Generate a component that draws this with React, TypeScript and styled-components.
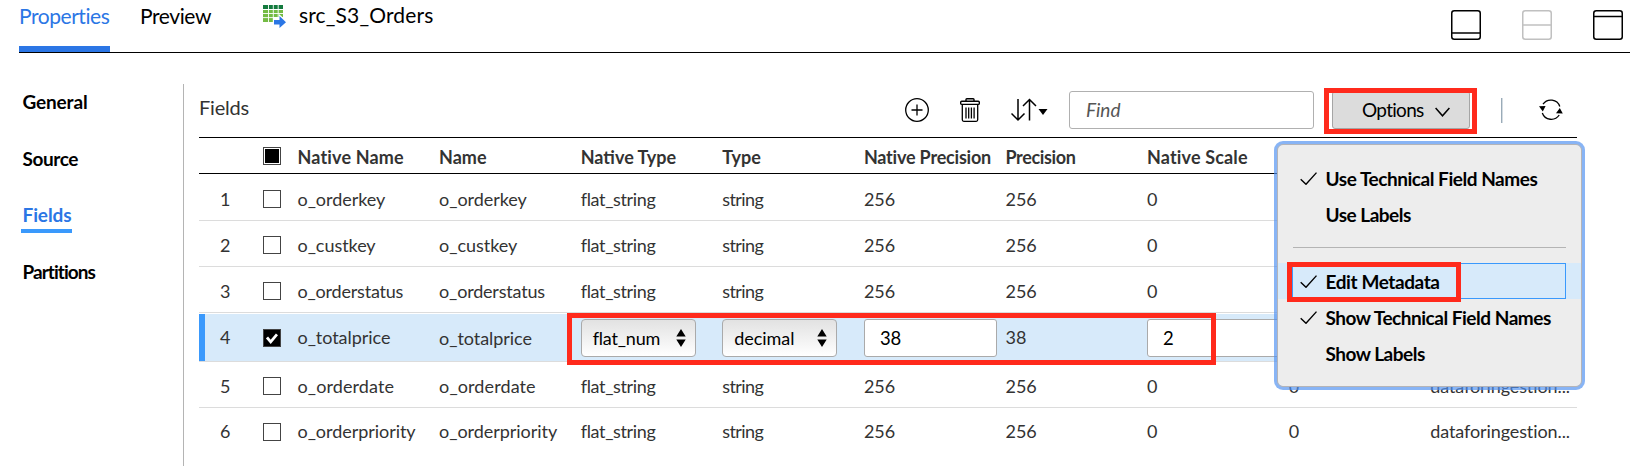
import React from "react";
import styled, { createGlobalStyle, css } from "styled-components";

const GlobalStyle = createGlobalStyle`
  *, *::before, *::after { box-sizing: border-box; }
  body { margin: 0; background: #fff; overflow: hidden; }
`;

const highlight = "#ff2a1c";

const Page = styled.div`
  width: 1630px;
  height: 466px;
  overflow: hidden;
  background: #fff;
  color: #000;
  font-family: Lato, "Liberation Sans", sans-serif;
  font-size: 18px;
  display: flex;
  flex-direction: column;
`;

const Text = styled.span<{ $track?: number }>`
  letter-spacing: ${(p) => p.$track ?? 0}px;
  white-space: nowrap;
`;

/* ---------- tab bar ---------- */

const TabBar = styled.header`
  display: flex;
  height: 53px;
  flex: none;
  margin-left: 19px;
  border-bottom: 1px solid #000;
`;

const Tab = styled.div<{ $active?: boolean }>`
  width: ${(p) => (p.$active ? 91 : 71)}px;
  margin-right: 30px;
  height: 52px;
  font-size: 21px;
  line-height: 32px;
  color: ${(p) => (p.$active ? "#2b76e5" : "#000")};
  border-bottom: ${(p) => (p.$active ? "6px solid #2b76e5" : "none")};
`;

const ObjectTitle = styled.div`
  display: flex;
  margin-left: 22px;
  gap: 13px;
  font-size: 21px;
  line-height: 29px;
  svg { margin-top: 5px; }
`;

const PanelIcons = styled.div`
  display: flex;
  gap: 41px;
  margin: 10px 7px 0 auto;
`;

/* ---------- body ---------- */

const Body = styled.div`
  display: flex;
  flex: 1;
  min-height: 0;
  padding: 31px 0 0 21px;
`;

const SideNav = styled.nav`
  width: 162px;
  display: flex;
  flex-direction: column;
  align-items: flex-start;
  gap: 24.7px;
  padding-top: 2px;
`;

const SideItem = styled.a<{ $active?: boolean }>`
  height: 32px;
  line-height: 32px;
  padding: 0 1px 0 1.500px;
  font-size: 19px;
  font-weight: 700;
  color: ${(p) => (p.$active ? "#2b76e5" : "#000")};
  ${(p) => p.$active && css`box-shadow: 0 4px 0 0 #3a99fc; height: 30px; margin-bottom: 2px;`}
`;

const Main = styled.main`
  border-left: 1px solid #b4b4b4;
  padding-left: 15px;
  width: 1394px;
  display: flex;
  flex-direction: column;
`;

const Toolbar = styled.div`
  display: flex;
  align-items: flex-start;
  height: 53px;
  flex: none;
  position: relative;
  color: #333;
`;

const Heading = styled.div`
  font-size: 20px;
  line-height: 47px;
  width: 706px;
`;

const ToolIcons = styled.div`
  display: flex;
  width: 164px;
  gap: 31px;
  padding-top: 14px;
  svg { flex: none; }
`;

const Find = styled.input`
  width: 245px;
  height: 38px;
  margin-top: 7px;
  padding: 0 0 1px 16px;
  border: 1px solid #b0b0b0;
  border-radius: 3px;
  font: italic 19px Lato, sans-serif;
  &::placeholder { color: #555; opacity: 1; }
`;

const OptionsWrap = styled.div`
  position: relative;
  margin: 7px 0 0 18px;
`;

const OptionsButton = styled.button`
  display: flex;
  align-items: center;
  gap: 11px;
  width: 138px;
  height: 38px;
  padding: 0 0 1px 29px;
  border: 1px solid #a5a5a5;
  border-radius: 3px;
  background: #dcdcdc;
  font: 19px Lato, sans-serif;
  color: #000;
  svg { margin-top: 4px; }
`;

const Callout = styled.div<{ $x: number; $y: number; $w: number; $h: number }>`
  position: absolute;
  left: ${(p) => p.$x}px;
  top: ${(p) => p.$y}px;
  width: ${(p) => p.$w}px;
  height: ${(p) => p.$h}px;
  border: 5px solid ${highlight};
  pointer-events: none;
`;

const Divider = styled.div`
  width: 1px;
  height: 25px;
  margin: 14px 36px 0 31px;
  background: #9aabb8;
  box-shadow: 1px 0 0 #d4dce2;
`;

const RefreshSlot = styled.div`
  padding-top: 14px;
`;

/* ---------- table ---------- */

const columns = css`
  display: grid;
  grid-template-columns: 64px 34.5px repeat(9, 141.6px);
`;

const Table = styled.div`
  position: relative;
  width: 1378px;
`;

const HeaderRow = styled.div`
  ${columns}
  height: 37px;
  width: 1378px;
  overflow: hidden;
  border-top: 1px solid #000;
  border-bottom: 1px solid #000;
  color: #333;
  font-weight: 700;
  line-height: 38px;
  font-size: 18px;
`;

const Row = styled.div<{ $h: number; $pad: number; $selected?: boolean; $last?: boolean }>`
  ${columns}
  width: 1378px;
  overflow: hidden;
  height: ${(p) => p.$h}px;
  padding-top: ${(p) => p.$pad}px;
  border-bottom: 1px solid ${(p) => (p.$last ? "transparent" : "#dcdcdc")};
  color: #333;
  line-height: 34px;
  ${(p) =>
    p.$selected &&
    css`
      margin-top: 1px;
      background: linear-gradient(90deg, #3a99fc 6px, #d7eafa 6px);
    `}
`;

const Num = styled.div<{ $drop?: number }>`
  padding: ${(p) => p.$drop ?? 0}px 0 0 21px;
`;

const Cell = styled.div<{ $drop?: number }>`
  padding-top: ${(p) => p.$drop ?? 0}px;
  white-space: nowrap;
`;

const Box = styled.div<{ $state?: "on" | "mixed"; $top: number }>`
  width: 18px;
  height: 18px;
  margin-top: ${(p) => p.$top}px;
  display: flex;
  align-items: center;
  justify-content: center;
  border: 1px solid #444;
  background: ${(p) => (p.$state === "on" ? "#000" : "#fff")};
  ${(p) => p.$state === "mixed" && css`&::after { content: ""; width: 14px; height: 14px; background: #000; }`}
`;

const Select = styled.div`
  display: flex;
  align-items: center;
  justify-content: space-between;
  width: 115px;
  height: 38px;
  margin-top: 1px;
  padding: 0 9px 0 11px;
  border: 1px solid #aaa;
  border-radius: 4px;
  background: linear-gradient(#e2e2e2, #fff);
  color: #000;
`;

const Entry = styled.input<{ $w: number }>`
  display: block;
  width: ${(p) => p.$w}px;
  height: 38px;
  margin-top: 1px;
  padding: 0 0 1px 15px;
  border: 1px solid #aaa;
  border-radius: 3px;
  background: #fff;
  font: 18.500px Lato, sans-serif;
  color: #000;
`;

/* ---------- menu ---------- */

const Menu = styled.div`
  position: absolute;
  left: -55px;
  top: 53px;
  z-index: 2;
  width: 305px;
  height: 243px;
  padding: 15px 0 0;
  border: 1px solid #b4b4b8;
  border-radius: 6px;
  background: #ededed;
  background-clip: padding-box;
  box-shadow: 0 0 0 3px rgba(80, 144, 240, 0.68);
  color: #000;
  font-size: 19px;
  font-weight: 700;
`;

const MenuItem = styled.div<{ $focused?: boolean }>`
  display: flex;
  height: 36px;
  padding: 0 15px 0 14px;
  background: ${(p) => (p.$focused ? "#d7eafa" : "transparent")};
`;

const MenuInner = styled.div<{ $focused?: boolean }>`
  display: flex;
  flex: 1;
  align-items: center;
  padding-left: 7px;
  border: 1px solid ${(p) => (p.$focused ? "#3a99fc" : "transparent")};
`;

const CheckSlot = styled.span`
  display: flex;
  width: 25.500px;
`;

const MenuRule = styled.div`
  height: 1px;
  margin: 15px 15px 15px;
  background: #b4b4b4;
`;

/* ---------- icons ---------- */

const TableIcon = () => (
  <svg width="23" height="23" viewBox="0 0 23 23">
    <path d="M0 0h20v4H0z" fill="#137a3e" />
    <path d="M0 5h20v12H0z" fill="#74bb44" />
    <path d="M5.5 0v17M10.3 0v17M15.2 0v17M0 4.5h20M0 8.5h20M0 12.6h20" stroke="#fff" strokeWidth=".9" />
    <path d="M10 12h6V9l8 7v7H10z" fill="#fff" />
    <path d="M11 15h5.5v-4L23 17.2 16.500 23v-3.500H11z" fill="#2b76e5" />
  </svg>
);

const PanelIcon = ({ line, color = "#000" }: { line: number; color?: string }) => (
  <svg width="30" height="30" viewBox="0 0 30 30" fill="none" stroke={color} strokeWidth="1.500">
    <rect x=".75" y=".75" width="28.500" height="28.500" rx="2.500" />
    <path d={`M1 ${line}h28`} />
  </svg>
);

const AddIcon = () => (
  <svg width="24" height="24" viewBox="0 0 24 24" fill="none" stroke="#000" strokeWidth="1.300">
    <circle cx="12" cy="12" r="11.300" />
    <path d="M12 6.500v11M6.500 12h11" />
  </svg>
);

const TrashIcon = () => (
  <svg width="20" height="24" viewBox="0 0 20 24" fill="none" stroke="#000" strokeWidth="1.400">
    <path d="M6 3V1.500q0-.8.8-.8h6.400q.8 0 .8.800V3" />
    <rect x=".7" y="3.200" width="18.600" height="3.200" rx="1" />
    <path d="M2.300 6.400v15.400q0 1.500 1.500 1.500h12.400q1.500 0 1.500-1.500V6.400M6 9.500v11M8.700 9.500v11M11.400 9.500v11M14.100 9.500v11" strokeWidth="1.300" />
  </svg>
);

const SortIcon = () => (
  <svg width="37" height="24" viewBox="0 0 37 24" fill="none" stroke="#000" strokeWidth="1.500">
    <path d="M7 1v21M.5 15.500l6.500 6.500 6.500-6.500M18.500 22.500V2M12 8l6.500-6.500L25 8" />
    <path d="M27.500 11h9l-4.500 6z" fill="#000" stroke="none" />
  </svg>
);

const Chevron = () => (
  <svg width="15" height="10" viewBox="0 0 15 10" fill="none" stroke="#000" strokeWidth="1.500">
    <path d="M.6 1l6.900 7.800L14.400 1" />
  </svg>
);

const RefreshIcon = () => (
  <svg width="26" height="24" viewBox="0 0 26 24" fill="none" stroke="#000" strokeWidth="1.300">
    <path d="M5 6.200A9.500 9.500 0 0 1 21.800 8.500M21.200 17A9.500 9.500 0 0 1 4.300 15" />
    <path d="M1 8.200l6.600-.3-2.800 5.500zM18 15.200l3.800-5.200 3 5.600z" fill="#000" stroke="none" />
  </svg>
);

const Tick = () => (
  <svg width="17" height="13" viewBox="0 0 17 13" fill="none" stroke="#000" strokeWidth="1.400">
    <path d="M.7 7.300l5.300 5L16.500.6" />
  </svg>
);

const BoxTick = () => (
  <svg width="12" height="11" viewBox="0 0 12 11" fill="none" stroke="#fff" strokeWidth="2.800">
    <path d="M1 4.500l3.700 4.300L11 1.300" />
  </svg>
);

const UpDown = () => (
  <svg width="10" height="18" viewBox="0 0 10 18">
    <path d="M5 0l4.700 7.500H.3zM5 18l4.700-7.500H.3z" />
  </svg>
);

/* ---------- data ---------- */

const headers: [string, number][] = [
  ["Native Name", 0.15],
  ["Name", 0],
  ["Native Type", 0],
  ["Type", 0],
  ["Native Precision", -0.2],
  ["Precision", -0.35],
  ["Native Scale", 0.15],
];

type Field = { n: number; name: string; h: number; pad: number; track: number; covered?: boolean };

const fields: Field[] = [
  { n: 1, name: "o_orderkey", h: 47, pad: 8, track: -0.05, covered: true },
  { n: 2, name: "o_custkey", h: 46, pad: 7, track: -0.05, covered: true },
  { n: 3, name: "o_orderstatus", h: 46, pad: 7, track: -0.2, covered: true },
  { n: 4, name: "o_totalprice", h: 48, pad: 4, track: -0.05 },
  { n: 5, name: "o_orderdate", h: 46, pad: 7, track: 0.1 },
  { n: 6, name: "o_orderpriority", h: 46, pad: 6, track: -0.05 },
];

const FieldRow = ({ f }: { f: Field }) => {
  const selected = f.n === 4;
  return (
    <Row $h={f.h} $pad={f.pad} $selected={selected} $last={f.n === 6}>
      <Num $drop={selected ? 2 : 0}><Text>{f.n}</Text></Num>
      <Box $top={selected ? 11 : f.n === 6 ? 9 : 8} $state={selected ? "on" : undefined}>
        {selected && <BoxTick />}
      </Box>
      <Cell $drop={selected ? 2 : 0}><Text $track={f.track}>{f.name}</Text></Cell>
      <Cell $drop={selected ? 3 : 0}><Text $track={f.track}>{f.name}</Text></Cell>
      {selected ? (
        <>
          <Cell><Select><Text $track={-0.2}>flat_num</Text><UpDown /></Select></Cell>
          <Cell><Select><Text $track={-0.05}>decimal</Text><UpDown /></Select></Cell>
          <Cell><Entry $w={133} defaultValue="38" /></Cell>
          <Cell $drop={2}><Text>38</Text></Cell>
          <Cell><Entry $w={141} defaultValue="2" /></Cell>
        </>
      ) : (
        <>
          <Cell><Text $track={-0.35}>flat_string</Text></Cell>
          <Cell><Text $track={-0.6}>string</Text></Cell>
          <Cell><Text>256</Text></Cell>
          <Cell><Text>256</Text></Cell>
          <Cell><Text>0</Text></Cell>
          {!f.covered && (
            <>
              <Cell><Text>0</Text></Cell>
              <Cell><Text $track={-0.1}>dataforingestion...</Text></Cell>
            </>
          )}
        </>
      )}
    </Row>
  );
};

export default function App() {
  return (
    <Page>
      <GlobalStyle />
      <TabBar>
        <Tab $active><Text $track={-0.45}>Properties</Text></Tab>
        <Tab><Text $track={-0.4}>Preview</Text></Tab>
        <ObjectTitle><TableIcon /><Text $track={0.15}>src_S3_Orders</Text></ObjectTitle>
        <PanelIcons>
          <PanelIcon line={23} />
          <PanelIcon line={15} color="#c0c0c0" />
          <PanelIcon line={6.500} />
        </PanelIcons>
      </TabBar>
      <Body>
        <SideNav>
          <SideItem><Text $track={-0.15}>General</Text></SideItem>
          <SideItem><Text $track={-0.4}>Source</Text></SideItem>
          <SideItem $active><Text $track={-0.1}>Fields</Text></SideItem>
          <SideItem><Text $track={-0.95}>Partitions</Text></SideItem>
        </SideNav>
        <Main>
          <Toolbar>
            <Heading><Text $track={-0.2}>Fields</Text></Heading>
            <ToolIcons><AddIcon /><TrashIcon /><SortIcon /></ToolIcons>
            <Find placeholder="Find" />
            <OptionsWrap>
              <OptionsButton><Text $track={-0.7}>Options</Text><Chevron /></OptionsButton>
              <Callout $x={-8} $y={-3} $w={153} $h={46} />
              <Menu>
                <MenuItem><MenuInner><CheckSlot><Tick /></CheckSlot><Text $track={-0.46}>Use Technical Field Names</Text></MenuInner></MenuItem>
                <MenuItem><MenuInner><CheckSlot /><Text $track={-0.5}>Use Labels</Text></MenuInner></MenuItem>
                <MenuRule />
                <MenuItem $focused><MenuInner $focused><CheckSlot><Tick /></CheckSlot><Text $track={-0.4}>Edit Metadata</Text></MenuInner></MenuItem>
                <MenuItem><MenuInner><CheckSlot><Tick /></CheckSlot><Text $track={-0.48}>Show Technical Field Names</Text></MenuInner></MenuItem>
                <MenuItem><MenuInner><CheckSlot /><Text $track={-0.5}>Show Labels</Text></MenuInner></MenuItem>
                <Callout $x={9} $y={117} $w={174} $h={40} />
              </Menu>
            </OptionsWrap>
            <Divider />
            <RefreshSlot><RefreshIcon /></RefreshSlot>
          </Toolbar>
          <Table>
            <HeaderRow>
              <span />
              <Box $top={9} $state="mixed" />
              {headers.map(([label, track]) => (
                <Text key={label} $track={track}>{label}</Text>
              ))}
            </HeaderRow>
            {fields.map((f) => <FieldRow key={f.n} f={f} />)}
            <Callout $x={368} $y={176} $w={649} $h={52} />
          </Table>
        </Main>
      </Body>
    </Page>
  );
}
